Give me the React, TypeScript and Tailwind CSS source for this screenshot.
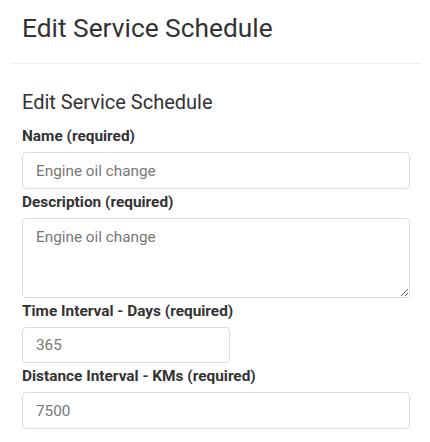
import React from "react"

const font = { fontFamily: "Roboto, 'Liberation Sans', sans-serif" }

const labelCls = "block text-[15.4px] leading-[20px] font-bold mb-[6px]"
const inputCls =
  "block w-full h-[37px] rounded-[4px] border border-[#dcdcdc] bg-white px-[13px] text-[15.3px] text-[#777] outline-none"

export default function App() {
  return (
    <div className="px-[10px] bg-white text-[#333]" style={font}>
      <h1 className="pl-[12px] pt-[13px] text-[26.3px] leading-[30px] font-normal">Edit Service Schedule</h1>
      <hr className="mt-[20px] border-0 border-t border-[#eeeeee]" />

      <div className="pl-[12px] pr-[10px] pt-[27px]">
        <h2 className="text-[20px] leading-[22px] font-normal">Edit Service Schedule</h2>

        <form className="mt-[13px]">
          <label className={labelCls}>Name (required)</label>
          <input className={inputCls} defaultValue="Engine oil change" />

          <label className={labelCls + " mt-[3px]"}>Description (required)</label>
          <textarea
            className="block w-full h-[80px] rounded-[4px] border border-[#dcdcdc] bg-white px-[13px] py-[8px] text-[15.3px] leading-[20px] text-[#777] outline-none"
            defaultValue="Engine oil change"
          />

          <label className={labelCls + " mt-[3px]"}>Time Interval - Days (required)</label>
          <input className={inputCls + " !w-[208px] !h-[36px]"} defaultValue="365" />

          <label className={labelCls + " mt-[3px]"}>Distance Interval - KMs (required)</label>
          <input className={inputCls} defaultValue="7500" />
        </form>
      </div>
    </div>
  )
}
